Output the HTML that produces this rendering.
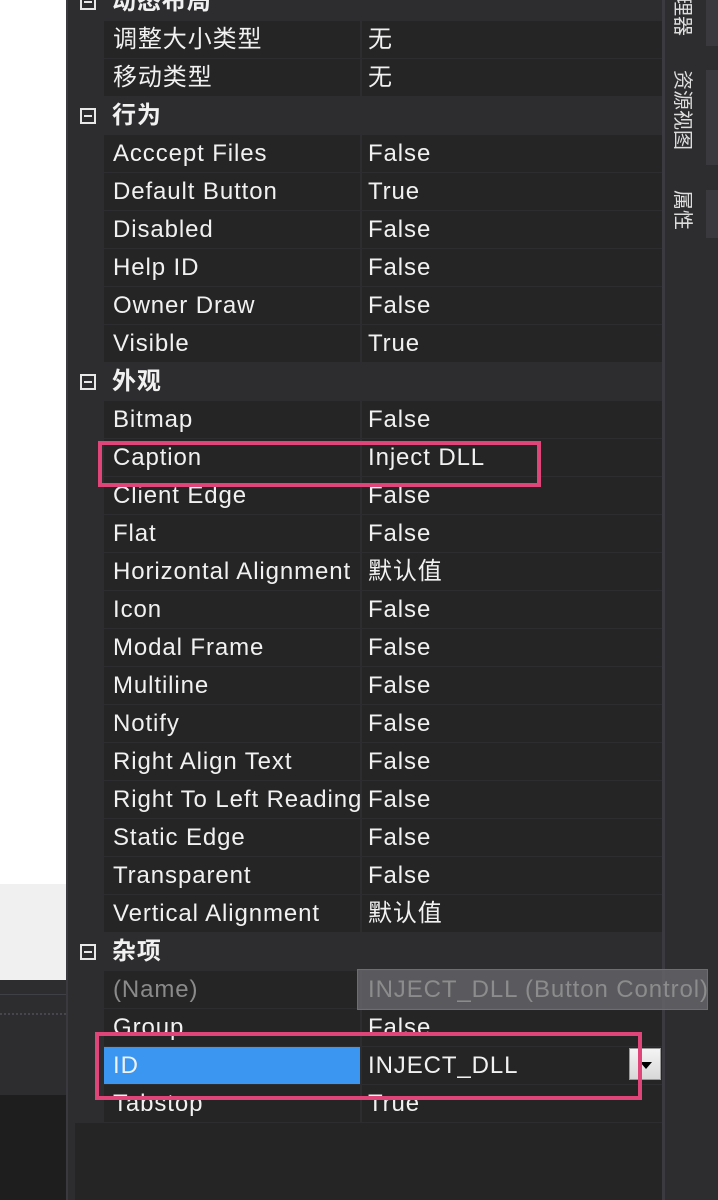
<!DOCTYPE html>
<html><head><meta charset="utf-8"><style>
*{margin:0;padding:0;box-sizing:border-box}
body{width:718px;height:1200px;overflow:hidden;background:#252526;position:relative;font-family:"Liberation Sans","Noto Sans CJK SC",sans-serif;color:#f1f1f1;font-size:24px;letter-spacing:0.9px}
.a{position:absolute}
.r{position:absolute;left:75px;width:587px;height:38px}
.cat{background:#2d2d30}
.prop{background:#2d2d30}
.prop .n{position:absolute;left:29px;top:0;width:256px;height:37px;background:#252526;overflow:hidden;white-space:nowrap;padding-left:9px;line-height:37px}
.prop .v{position:absolute;left:287px;top:0;width:300px;height:37px;background:#252526;padding-left:6px;line-height:37px;white-space:nowrap}
.cat .t{position:absolute;left:37px;line-height:38px;font-weight:bold}
.cat .b{position:absolute;left:5px;top:11px;width:16px;height:16px;border:2px solid #e8e8e8}
.cat .b:after{content:"";position:absolute;left:2px;top:5px;width:8px;height:2px;background:#e8e8e8}
.vt{position:absolute;left:668px;width:28px;writing-mode:vertical-rl;text-orientation:sideways;font-size:20px;color:#ddd;line-height:28px;letter-spacing:0}
</style></head><body>
<div class="a" style="left:0;top:0;width:66px;height:884px;background:#fff"></div>
<div class="a" style="left:0;top:884px;width:66px;height:96px;background:#f0f0f0"></div>
<div class="a" style="left:0;top:980px;width:66px;height:115px;background:#2d2d30"></div>
<div class="a" style="left:0;top:994px;width:66px;height:1px;background:#3f3f46"></div>
<div class="a" style="left:0;top:1013px;width:66px;height:4px;border-top:2px dotted #46464c"></div>
<div class="a" style="left:0;top:1095px;width:66px;height:105px;background:#1e1e1e"></div>
<div class="a" style="left:66px;top:0;width:9px;height:1200px;background:#2d2d30;border-left:2px solid #3a3a3e"></div>
<div class="a" style="left:662px;top:0;width:56px;height:1200px;background:#2d2d30;border-left:3px solid #3a3a40"></div>
<div class="a" style="left:706px;top:0;width:12px;height:46px;background:#3a3a3e"></div>
<div class="a" style="left:706px;top:70px;width:12px;height:95px;background:#3a3a3e"></div>
<div class="a" style="left:706px;top:190px;width:12px;height:48px;background:#3a3a3e"></div>
<div class="vt" style="top:-4px">理器</div>
<div class="vt" style="top:70px">资源视图</div>
<div class="vt" style="top:190px">属性</div>

<div class="r cat" style="top:-17px"><div class="b"></div><div class="t">动态布局</div></div>
<div class="r prop" style="top:21px"><div class="n">调整大小类型</div><div class="v">无</div></div>
<div class="r prop" style="top:59px"><div class="n">移动类型</div><div class="v">无</div></div>
<div class="r cat" style="top:97px"><div class="b"></div><div class="t">行为</div></div>
<div class="r prop" style="top:135px"><div class="n">Acccept Files</div><div class="v">False</div></div>
<div class="r prop" style="top:173px"><div class="n">Default Button</div><div class="v">True</div></div>
<div class="r prop" style="top:211px"><div class="n">Disabled</div><div class="v">False</div></div>
<div class="r prop" style="top:249px"><div class="n">Help ID</div><div class="v">False</div></div>
<div class="r prop" style="top:287px"><div class="n">Owner Draw</div><div class="v">False</div></div>
<div class="r prop" style="top:325px"><div class="n">Visible</div><div class="v">True</div></div>
<div class="r cat" style="top:363px"><div class="b"></div><div class="t">外观</div></div>
<div class="r prop" style="top:401px"><div class="n">Bitmap</div><div class="v">False</div></div>
<div class="r prop" style="top:439px"><div class="n">Caption</div><div class="v">Inject DLL</div></div>
<div class="r prop" style="top:477px"><div class="n">Client Edge</div><div class="v">False</div></div>
<div class="r prop" style="top:515px"><div class="n">Flat</div><div class="v">False</div></div>
<div class="r prop" style="top:553px"><div class="n">Horizontal Alignment</div><div class="v">默认值</div></div>
<div class="r prop" style="top:591px"><div class="n">Icon</div><div class="v">False</div></div>
<div class="r prop" style="top:629px"><div class="n">Modal Frame</div><div class="v">False</div></div>
<div class="r prop" style="top:667px"><div class="n">Multiline</div><div class="v">False</div></div>
<div class="r prop" style="top:705px"><div class="n">Notify</div><div class="v">False</div></div>
<div class="r prop" style="top:743px"><div class="n">Right Align Text</div><div class="v">False</div></div>
<div class="r prop" style="top:781px"><div class="n">Right To Left Reading</div><div class="v">False</div></div>
<div class="r prop" style="top:819px"><div class="n">Static Edge</div><div class="v">False</div></div>
<div class="r prop" style="top:857px"><div class="n">Transparent</div><div class="v">False</div></div>
<div class="r prop" style="top:895px"><div class="n">Vertical Alignment</div><div class="v">默认值</div></div>
<div class="r cat" style="top:933px"><div class="b"></div><div class="t">杂项</div></div>
<div class="r prop" style="top:971px"><div class="n" style="color:#8a8a8a">(Name)</div><div class="v"></div></div>
<div class="r prop" style="top:1009px"><div class="n">Group</div><div class="v">False</div></div>
<div class="r prop" style="top:1047px"><div class="n" style="background:#3a96f0">ID</div><div class="v">INJECT_DLL</div></div>
<div class="r prop" style="top:1085px"><div class="n">Tabstop</div><div class="v">True</div></div>

<div class="a" style="left:629px;top:1048px;width:32px;height:32px;background:linear-gradient(#f4f4f4,#d8d8d8);border:1px solid #999"></div>
<div class="a" style="left:640px;top:1062px;width:0;height:0;border-left:6px solid transparent;border-right:6px solid transparent;border-top:7px solid #000"></div>
<div class="a" style="left:357px;top:969px;width:351px;height:41px;background:rgba(100,100,104,0.85);border:1px solid #6e6e72;color:#8c8c8c;line-height:39px;padding-left:10px;white-space:nowrap;overflow:hidden">INJECT_DLL (Button Control)</div>

<div class="a" style="left:98px;top:441px;width:443px;height:46px;border:4px solid #e0457a"></div>
<div class="a" style="left:95px;top:1032px;width:547px;height:68px;border:4px solid #e0457a"></div>
</body></html>
